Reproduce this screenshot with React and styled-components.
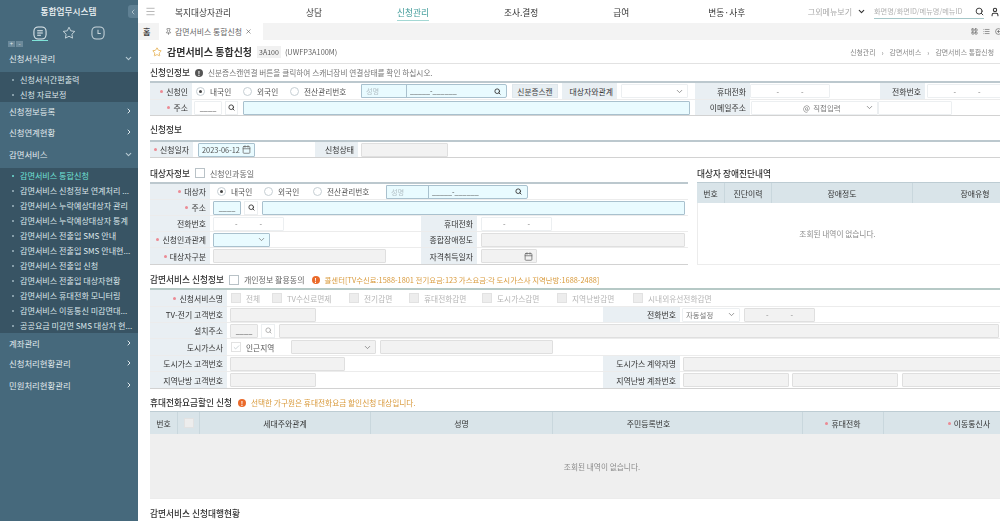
import React from 'react';
import styled, { createGlobalStyle } from 'styled-components';
import { Menu, ChevronDown, ChevronRight, ChevronLeft, Search, User, Star, Pin, X, Calendar, Check, LayoutGrid, List, CirclePlus } from 'lucide-react';

const Global = createGlobalStyle`
  html, body { margin: 0; padding: 0; background: #fff; }
  body { font-family: "Noto Sans CJK KR", "Noto Sans", sans-serif; font-size: 8px; color: #333; }
  * { box-sizing: border-box; }
`;

const Page = styled.div`
  display: flex; width: 1000px; height: 521px; overflow: hidden; filter: blur(0.35px);
`;

/* ---------- sidebar ---------- */
const Side = styled.aside`
  position: relative; flex: 0 0 138px; height: 521px; background: #46697c; color: #e6eef1;
`;
const Brand = styled.div`
  height: 23px; display: flex; align-items: center; justify-content: center;
  font-size: 8.7px; font-weight: 500; padding-right: 1px; color: #eef3f5;
`;
const Collapse = styled.button`
  position: absolute; right: 0; top: 5px; width: 10px; height: 13px; padding: 0; border: 0;
  background: #5f8093; color: #cfdde3; border-radius: 3px 0 0 3px;
  display: flex; align-items: center; justify-content: center;
`;
const SideTabs = styled.div`
  height: 18px; display: flex; align-items: flex-start; padding-left: 32px; gap: 13px;
`;
const SideTab = styled.div`
  width: 16px; height: 18px; padding-top: 3px; display: flex; justify-content: center; color: #e6eef1;
  border-bottom: 1px solid ${p => (p.$on ? '#7fe3d8' : 'transparent')};
`;
const TreeTools = styled.div`
  height: 6px; display: flex; gap: 1px; padding-left: 8px;
`;
const TreeTool = styled.div`
  width: 7px; height: 6px; background: #6c8a9b; color: #dfe8ec; font-size: 6px; line-height: 6px; text-align: center;
`;
const MenuItem = styled.div`
  height: ${p => p.$h || 22}px; padding: 0 5px ${p => p.$pb || 0}px 9px; display: flex; align-items: center;
  justify-content: space-between; font-size: 8.4px; color: #e3ebee;
`;
const SubPanel = styled.div`
  background: #385464;
`;
const SubItem = styled.div`
  height: 15px; display: flex; align-items: center; padding-left: 12px; font-size: 8.1px; white-space: nowrap;
  color: ${p => (p.$on ? '#6fe0d6' : '#dbe5e9')};
  &::before { content: ''; width: 2px; height: 2px; border-radius: 50%; margin-right: 6px; background: ${p => (p.$on ? '#6fe0d6' : '#9fb6c1')}; }
`;

/* ---------- top ---------- */
const Main = styled.main`
  flex: 1; min-width: 0; height: 521px; overflow: hidden;
`;
const TopBar = styled.header`
  position: relative; height: 23px; display: flex; align-items: center; padding-left: 7px;
  box-shadow: 0 1px 3px rgba(0,0,0,.14); background: #fff;
`;
const Nav = styled.nav`
  display: flex; gap: 75px; margin-left: 19px;
`;
const NavItem = styled.div`
  font-size: 8.7px; white-space: nowrap; padding: 3px 0 1px; margin-left: ${p => p.$ml || 0}px; color: ${p => (p.$on ? '#3d9a98' : '#333')};
  border-bottom: 1px solid ${p => (p.$on ? '#a4d8d4' : 'transparent')};
`;
const TopRight = styled.div`
  margin-left: auto; display: flex; align-items: center; color: #333;
`;
const MoreMenu = styled.div`
  font-size: 8px; color: #a9a9a9; white-space: nowrap; margin-right: 5px;
`;
const GlobalSearch = styled.div`
  width: 110px; height: 15px; margin: 0 6px 0 8px; display: flex; align-items: center; justify-content: space-between;
  font-size: 7.2px; color: #b2b2b2; border-bottom: 1px solid #a5c6c8; white-space: nowrap;
`;
const TabBar = styled.div`
  height: 17px; background: #f3f3f3; display: flex; align-items: stretch; padding-left: 5px; position: relative;
`;
const HomeTab = styled.div`
  width: 16px; display: flex; align-items: center; font-size: 8px; font-weight: 700; color: #444;
`;
const PageTab = styled.div`
  width: 104px; background: #fff; display: flex; align-items: center; gap: 3px; padding-left: 6px;
  font-size: 7.9px; color: #666; white-space: nowrap;
`;
const TabTools = styled.div`
  margin-left: auto; display: flex; align-items: center; gap: 5px; color: #555; padding-right: 0;
  margin-right: -2px;
`;

/* ---------- content ---------- */
const Content = styled.div`
  padding-left: 12px; width: 920px;
`;
const TitleRow = styled.div`
  height: 24px; width: 850px; display: flex; align-items: center; border-bottom: 1px solid #e2e2e2; padding: 0 6px 0 2px;
`;
const PageTitle = styled.h1`
  margin: 0 5px 0 5px; font-size: 10px; font-weight: 700; color: #333; white-space: nowrap;
`;
const Code = styled.span`
  font-size: 7px; color: #555; background: #f1f1f1; padding: 1px 2px; margin-right: 4px;
`;
const ProgramId = styled.span`
  font-size: 7.4px; color: #666;
`;
const Crumbs = styled.div`
  margin-left: auto; display: flex; align-items: center; gap: 6px; font-size: 6.9px; color: #888; white-space: nowrap;
`;
const Head = styled.div`
  height: ${p => p.$h || 17}px; margin: ${p => p.$mt || 0}px 0 ${p => p.$mb || 0}px; display: flex; align-items: center; gap: 5px; white-space: nowrap;
`;
const HeadTitle = styled.h2`
  margin: 0; font-size: 8.7px; font-weight: 500; color: #333;
`;
const Hint = styled.span`
  font-size: ${p => p.$fs || 7.7}px; color: ${p => (p.$warn ? '#d99a3c' : p.$dark ? '#666' : '#777')};
`;
const Dot = styled.i`
  flex: none; width: 8px; height: 8px; border-radius: 50%; font-style: normal; font-size: 6.5px; line-height: 8px; text-align: center;
  color: #fff; font-weight: 700; margin-left: ${p => p.$ml || 0}px; background: ${p => (p.$warn ? '#ea6a2a' : '#555')};
`;
const Table = styled.div`
  width: ${p => p.$w || 880}px; border-top: 2px solid ${p => p.$line || '#bcc8ce'}; border-bottom: 1px solid #d2d2d2;
`;
const Row = styled.div`
  height: ${p => p.$h || 16}px; display: flex; align-items: center; border-bottom: 1px solid #ececec;
  &:last-child { border-bottom: 0; }
`;
const Label = styled.div`
  flex: none; width: ${p => p.$w}px; margin-left: ${p => p.$ml || 0}px; height: 100%; background: #e9eff3;
  display: flex; align-items: center; justify-content: flex-end; padding-right: 4px; font-size: 7.9px; color: #333; white-space: nowrap;
  ${p => p.$req && `&::before { content: ''; width: 3px; height: 3px; border-radius: 50%; background: #ec8a94; margin-right: 3px; }`}
`;
const tones = {
  plain: 'background:#fff;border:1px solid #eceff1;color:#777;',
  cyan: 'background:#e9fbff;border:1px solid #a9c1ce;color:#555;',
  off: 'background:#f2f2f2;border:1px solid #dfdfdf;color:#888;',
};
const Box = styled.div`
  flex: none; width: ${p => p.$w}px; height: ${p => p.$bh || 14}px; margin-left: ${p => p.$ml || 0}px;
  display: flex; align-items: center; justify-content: ${p => p.$jc || 'flex-start'}; padding: 0 3px; font-size: 7.4px; white-space: nowrap;
  border-radius: 1px; ${p => tones[p.$tone || 'plain']}
`;
const Phone = styled(Box).attrs({ $jc: 'center' })`
  gap: 22px;
`;
const Masked = styled(Box)`
  justify-content: center; align-items: flex-end; color: #444; line-height: 12px;
`;
const SearchBtn = styled.div`
  flex: none; width: ${p => p.$w || 13}px; height: 14px; margin-left: ${p => p.$ml || 3}px; display: flex; align-items: center; justify-content: center;
  background: #fff; border: 1px solid #eceff1; color: ${p => (p.$off ? '#aaa' : '#333')};
`;
const IdBox = styled.div`
  flex: none; width: ${p => p.$w}px; height: 14px; display: flex; border: 1px solid #a9c1ce; background: #e9fbff; font-size: 7.2px;
  border-radius: 0 2px 2px 0;
`;
const IdName = styled.div`
  flex: 0 0 ${p => p.$w}px; color: #b3c0c6; padding-left: 4px; display: flex; align-items: center; border-right: 1px solid #a9c1ce;
`;
const IdNum = styled.div`
  flex: 1; display: flex; justify-content: space-between; align-items: center; padding: 0 5px 0 3px; color: #444;
`;
const Opt = styled.label`
  flex: none; width: ${p => p.$w}px; margin-left: ${p => p.$ml || 0}px; display: flex; align-items: center; gap: 5px; font-size: 7.7px;
  color: ${p => (p.$off ? '#b5b5b5' : '#555')}; white-space: nowrap; height: 14px; background: ${p => (p.$bg ? '#fff' : 'transparent')};
`;
const Radio = styled.span`
  flex: none; width: 9px; height: 9px; border: 1px solid #c5ced3; border-radius: 50%; background: #fff; display: flex; align-items: center; justify-content: center;
  &::after { content: ''; width: 3px; height: 3px; border-radius: 50%; background: ${p => (p.$on ? '#444' : 'transparent')}; }
`;
const CheckBox = styled.span`
  flex: none; width: ${p => p.$s || 10}px; height: ${p => p.$s || 10}px; border: 1px solid ${p => (p.$off ? '#e2e2e2' : '#b9c2c7')};
  background: ${p => (p.$fill ? '#ededed' : '#fff')}; color: #a9b5bb; display: flex; align-items: center; justify-content: center;
`;
const Btn = styled.div`
  flex: none; width: ${p => p.$w}px; height: 14px; margin-left: ${p => p.$ml || 0}px; background: #e8eff3; border: 1px solid #dfe7ec;
  font-size: 7.7px; color: #444; display: flex; align-items: center; justify-content: center; white-space: nowrap;
`;
const Split = styled.div`
  display: flex; gap: 9px;
`;
const Panel = styled.div`
  flex: none; width: ${p => p.$w}px;
`;
const GridHead = styled.div`
  display: grid; grid-template-columns: ${p => p.$cols}; height: ${p => p.$h}px; width: ${p => p.$w}px; background: #d9e4e9; border-top: 1px solid #bdccd3;
`;
const GridCell = styled.div`
  display: flex; align-items: center; justify-content: center; font-size: 7.9px; color: #333; white-space: nowrap;
  border-right: 1px solid #c9d7dd; padding-right: ${p => p.$pr || 0}px;
  &:last-child { border-right: 0; }
  ${p => p.$req && `&::before { content: ''; width: 3px; height: 3px; border-radius: 50%; background: #ec8a94; margin-right: 3px; }`}
`;
const Empty = styled.div`
  height: ${p => p.$h}px; width: ${p => p.$w}px; padding-right: ${p => p.$pr || 0}px; display: flex; align-items: center; justify-content: center;
  font-size: 7.7px; color: #8b8b8b; background: ${p => (p.$gray ? '#efefef' : '#fff')};
  border-bottom: 1px solid #ececec; border-left: ${p => (p.$gray ? '0' : '1px solid #ececec')};
`;
const EmailValue = styled.span`
  margin-left: 48px;
`;

const P = () => <><span>-</span><span>-</span></>;
const Sc = ({ off }) => <Search size={7} strokeWidth={3} color={off ? '#aaa' : '#333'} />;
const Sel = ({ children, ...rest }) => (
  <Box {...rest} $jc="space-between">{children || <span />}<ChevronDown size={9} color="#777" /></Box>
);
const DateIcon = <Calendar size={9} color="#666" />;

const IconForm = () => (
  <svg width="14" height="14" viewBox="0 0 15 15" fill="none" stroke="currentColor" strokeWidth="1.1"><rect x="1" y="1" width="13" height="13" rx="4.5" /><path d="M4.5 5.2h6M4.5 7.5h6M4.5 9.8h4" /></svg>
);
const IconStar = () => (
  <svg width="14" height="14" viewBox="0 0 15 15" fill="none" stroke="#c9d6dc" strokeWidth="1"><path d="M7.5 1.3l1.9 3.9 4.3.6-3.1 3 .7 4.2-3.8-2-3.8 2 .7-4.2-3.1-3 4.3-.6z" /></svg>
);
const IconClock = () => (
  <svg width="14" height="14" viewBox="0 0 15 15" fill="none" stroke="#c9d6dc" strokeWidth="1.1"><rect x="1" y="1" width="13" height="13" rx="4.5" /><path d="M7.5 4v4h3" /></svg>
);

const subs = ['감면서비스 통합신청', '감면서비스 신청정보 연계처리 ...', '감면서비스 누락예상대상자 관리', '감면서비스 누락예상대상자 통계', '감면서비스 전출입 SMS 안내', '감면서비스 전출입 SMS 안내현...', '감면서비스 전출입 신청', '감면서비스 전출입 대상자현황', '감면서비스 휴대전화 모니터링', '감면서비스 이동통신 미감면대...', '공공요금 미감면 SMS 대상자 현...'];

export default function App() {
  const down = <ChevronDown size={9} strokeWidth={3} color="#b5c9d2" />;
  const right = <ChevronRight size={8} strokeWidth={3} color="#dfe8ec" />;
  return (
    <Page>
      <Global />
      <Side>
        <Brand>통합업무시스템</Brand>
        <Collapse><ChevronLeft size={8} /></Collapse>
        <SideTabs>
          <SideTab $on><IconForm /></SideTab>
          <SideTab><IconStar /></SideTab>
          <SideTab><IconClock /></SideTab>
        </SideTabs>
        <TreeTools><TreeTool>+</TreeTool><TreeTool>-</TreeTool></TreeTools>
        <MenuItem $h={25} $pb={3}>신청서식관리{down}</MenuItem>
        <SubPanel>
          <SubItem>신청서식간편출력</SubItem>
          <SubItem>신청 자료보정</SubItem>
        </SubPanel>
        <MenuItem $h={19} $pb={2}>신청정보등록{right}</MenuItem>
        <MenuItem>신청연계현황{right}</MenuItem>
        <MenuItem $h={25} $pb={3}>감면서비스{down}</MenuItem>
        <SubPanel>
          {subs.map((s, i) => <SubItem key={s} $on={i === 0}>{s}</SubItem>)}
        </SubPanel>
        <MenuItem $h={19}>계좌관리{right}</MenuItem>
        <MenuItem>신청처리현황관리{right}</MenuItem>
        <MenuItem>민원처리현황관리{right}</MenuItem>
      </Side>
      <Main>
        <TopBar>
          <Menu size={11} strokeWidth={1} color="#666" />
          <Nav>
            <NavItem>복지대상자관리</NavItem>
            <NavItem>상담</NavItem>
            <NavItem $on>신청관리</NavItem>
            <NavItem>조사.결정</NavItem>
            <NavItem>급여</NavItem>
            <NavItem $ml={4}>변동·사후</NavItem>
          </Nav>
          <TopRight>
            <MoreMenu>그외메뉴보기</MoreMenu>
            <ChevronDown size={9} strokeWidth={3} color="#333" />
            <GlobalSearch>화면명/화면ID/메뉴명/메뉴ID<Search size={9} strokeWidth={2.5} color="#333" /></GlobalSearch>
            <User size={10} strokeWidth={2.5} />
          </TopRight>
        </TopBar>
        <TabBar>
          <HomeTab>홈</HomeTab>
          <PageTab><Pin size={7} color="#555" />감면서비스 통합신청<X size={7} color="#555" /></PageTab>
          <TabTools><LayoutGrid size={7} /><List size={7} /><CirclePlus size={7} /></TabTools>
        </TabBar>
        <Content>
          <TitleRow>
            <Star size={10} color="#e6b04f" />
            <PageTitle>감면서비스 통합신청</PageTitle>
            <Code>3A100</Code>
            <ProgramId>(UWFP3A100M)</ProgramId>
            <Crumbs>
              <span>신청관리</span><span>›</span><span>감면서비스</span><span>›</span><span>감면서비스 통합신청</span>
            </Crumbs>
          </TitleRow>

          <Head>
            <HeadTitle>신청인정보</HeadTitle>
            <Dot>!</Dot>
            <Hint>신분증스캔연결 버튼을 클릭하여 스캐너장비 연결상태를 확인 하십시오.</Hint>
          </Head>
          <Table>
            <Row $h={17}>
              <Label $w={42} $req>신청인</Label>
              <Opt $w={47} $ml={4}><Radio $on />내국인</Opt>
              <Opt $w={47}><Radio />외국인</Opt>
              <Opt $w={71}><Radio />전산관리번호</Opt>
              <IdBox $w={146}><IdName $w={45}>성명</IdName><IdNum>_____-______<Sc /></IdNum></IdBox>
              <Btn $w={46} $ml={5}>신분증스캔</Btn>
              <Label $w={55} $ml={4}>대상자와관계</Label>
              <Sel $w={67} $ml={4} />
              <Label $w={55} $ml={7}>휴대전화</Label>
              <Phone $w={80}><P /></Phone>
              <Label $w={45} $ml={50}>전화번호</Label>
              <Phone $w={80} $ml={2}><P /></Phone>
            </Row>
            <Row $h={15}>
              <Label $w={42} $req>주소</Label>
              <Masked $w={28} $ml={2}>____</Masked>
              <SearchBtn><Sc /></SearchBtn>
              <Box $w={447} $ml={5} $tone="cyan" />
              <Label $w={55} $ml={5}>이메일주소</Label>
              <Sel $w={127} $ml={1}><EmailValue>@ &nbsp;직접입력</EmailValue></Sel>
              <Box $w={74} />
            </Row>
          </Table>

          <Head $mt={5} $mb={2}><HeadTitle>신청정보</HeadTitle></Head>
          <Table>
            <Row $h={15}>
              <Label $w={43} $req>신청일자</Label>
              <Box $w={57} $ml={5} $jc="space-between" $tone="cyan">2023-06-12{DateIcon}</Box>
              <Label $w={43} $ml={60}>신청상태</Label>
              <Box $w={87} $ml={3} $tone="off" />
            </Row>
          </Table>

          <Split>
            <Panel $w={538}>
              <Head $mt={6} $h={18}>
                <HeadTitle>대상자정보</HeadTitle>
                <CheckBox />
                <Hint $fs={8} $dark>신청인과동일</Hint>
              </Head>
              <Table $w={538}>
                <Row>
                  <Label $w={60} $req>대상자</Label>
                  <Opt $w={47} $ml={7}><Radio $on />내국인</Opt>
                  <Opt $w={49}><Radio />외국인</Opt>
                  <Opt $w={73}><Radio />전산관리번호</Opt>
                  <IdBox $w={142}><IdName $w={42}>성명</IdName><IdNum>_____-______<Sc /></IdNum></IdBox>
                </Row>
                <Row>
                  <Label $w={60} $req>주소</Label>
                  <Masked $w={28} $ml={3} $tone="cyan">____</Masked>
                  <SearchBtn $w={14}><Sc /></SearchBtn>
                  <Box $w={423} $ml={4} $tone="cyan" />
                </Row>
                <Row>
                  <Label $w={60}>전화번호</Label>
                  <Phone $w={71} $ml={3}><P /></Phone>
                  <Label $w={56} $ml={137}>휴대전화</Label>
                  <Phone $w={71} $ml={4}><P /></Phone>
                </Row>
                <Row>
                  <Label $w={60} $req>신청인과관계</Label>
                  <Sel $w={57} $ml={3} $tone="cyan" />
                  <Label $w={56} $ml={151}>종합장애정도</Label>
                  <Box $w={204} $ml={4} $tone="off" />
                </Row>
                <Row>
                  <Label $w={60} $req>대상자구분</Label>
                  <Box $w={173} $ml={3} $tone="off" />
                  <Label $w={56} $ml={35}>자격취득일자</Label>
                  <Box $w={56} $ml={4} $tone="off" $jc="flex-end">{DateIcon}</Box>
                </Row>
              </Table>
            </Panel>
            <Panel $w={340}>
              <Head $mt={6} $h={18}><HeadTitle>대상자 장애진단내역</HeadTitle></Head>
              <GridHead $h={21} $w={340} $cols="28px 47px 141px 124px">
                <GridCell>번호</GridCell>
                <GridCell>진단이력</GridCell>
                <GridCell>장애정도</GridCell>
                <GridCell>장애유형</GridCell>
              </GridHead>
              <Empty $h={62} $w={340} $pr={60}>조회된 내역이 없습니다.</Empty>
            </Panel>
          </Split>

          <Head $mt={6}>
            <HeadTitle>감면서비스 신청정보</HeadTitle>
            <CheckBox />
            <Hint $fs={8} $dark>개인정보 활용동의</Hint>
            <Dot $warn $ml={2}>!</Dot>
            <Hint $warn $fs={7.4}>콜센터[TV수신료:1588-1801 전기요금:123 가스요금:각 도시가스사 지역난방:1688-2488]</Hint>
          </Head>
          <Table $line="#b6c9c6">
            <Row $h={17}>
              <Label $w={77} $req>신청서비스명</Label>
              <Opt $w={41} $ml={4} $off><CheckBox $off $fill />전체</Opt>
              <Opt $w={77} $off><CheckBox $off $fill />TV수신료면제</Opt>
              <Opt $w={60} $off><CheckBox $off $fill />전기감면</Opt>
              <Opt $w={73} $off><CheckBox $off $fill />휴대전화감면</Opt>
              <Opt $w={75} $off><CheckBox $off $fill />도시가스감면</Opt>
              <Opt $w={76} $off><CheckBox $off $fill />지역난방감면</Opt>
              <Opt $w={90} $off><CheckBox $off $fill />시내외유선전화감면</Opt>
            </Row>
            <Row>
              <Label $w={77}>TV-전기 고객번호</Label>
              <Box $w={86} $ml={3} $tone="off" />
              <Label $w={77} $ml={287}>전화번호</Label>
              <Sel $w={58} $ml={2}><span>자동설정</span></Sel>
              <Phone $w={71} $ml={4} $tone="off"><P /></Phone>
            </Row>
            <Row>
              <Label $w={77}>설치주소</Label>
              <Masked $w={28} $ml={3} $tone="off">____</Masked>
              <SearchBtn $w={14} $off><Sc off /></SearchBtn>
              <Box $w={720} $ml={4} $tone="off" />
            </Row>
            <Row $h={17}>
              <Label $w={77}>도시가스사</Label>
              <Opt $w={60} $ml={4} $bg><CheckBox $off><Check size={7} /></CheckBox>인근지역</Opt>
              <Sel $w={85} $tone="off" />
              <Box $w={173} $ml={4} $tone="off" />
            </Row>
            <Row>
              <Label $w={77}>도시가스 고객번호</Label>
              <Box $w={115} $ml={3} $tone="off" />
              <Label $w={77} $ml={258}>도시가스 계약자명</Label>
              <Box $w={320} $ml={3} $tone="off" />
            </Row>
            <Row>
              <Label $w={77}>지역난방 고객번호</Label>
              <Box $w={86} $ml={3} $tone="off" />
              <Label $w={77} $ml={287}>지역난방 계좌번호</Label>
              <Box $w={106} $ml={3} $tone="off" />
              <Box $w={106} $ml={3} $tone="off" />
              <Box $w={106} $ml={4} $tone="off" />
            </Row>
          </Table>

          <Head $mt={5}>
            <HeadTitle>휴대전화요금할인 신청</HeadTitle>
            <Dot $warn $ml={1}>!</Dot>
            <Hint $warn>선택한 가구원은 휴대전화요금 할인신청 대상입니다.</Hint>
          </Head>
          <GridHead $h={23} $w={904} $cols="28px 22px 171px 182px 250px 81px 170px">
            <GridCell>번호</GridCell>
            <GridCell><CheckBox $s={10} $off $fill /></GridCell>
            <GridCell>세대주와관계</GridCell>
            <GridCell>성명</GridCell>
            <GridCell $pr={58}>주민등록번호</GridCell>
            <GridCell $req>휴대전화</GridCell>
            <GridCell $req>이동통신사</GridCell>
          </GridHead>
          <Empty $h={65} $w={904} $gray>조회된 내역이 없습니다.</Empty>
          <Head $mt={6}><HeadTitle>감면서비스 신청대행현황</HeadTitle></Head>
        </Content>
      </Main>
    </Page>
  );
}
